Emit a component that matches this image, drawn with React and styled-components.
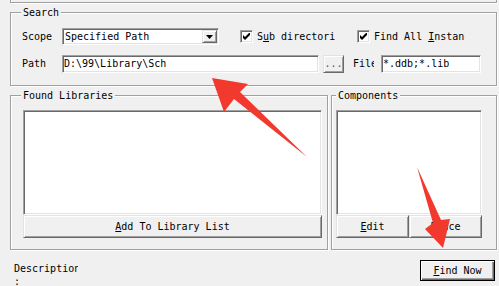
import React from "react";
import styled, { createGlobalStyle } from "styled-components";

const Global = createGlobalStyle`
  html, body { margin: 0; padding: 0; background: #f0f0f0; }
  body {
    width: 499px; height: 286px; overflow: hidden;
    font-family: "DejaVu Sans Mono", "Liberation Mono", monospace;
    font-size: 10px; color: #000;
  }
  * { box-sizing: border-box; }
`;

const Window = styled.div`
  position: relative;
  width: 499px;
  height: 286px;
  overflow: hidden;
  padding-left: 10px;
`;

const Content = styled.div`
  width: 487px;
  display: flex;
  flex-direction: column;
`;

const TopFrame = styled.div`
  height: 3px;
  border: 1px solid #a0a0a0;
  border-top: none;
  box-shadow: 1px 1px 0 #fff, inset 1px 0 0 #fff;
`;

const Group = styled.div`
  position: relative;
  border: 1px solid #a0a0a0;
  box-shadow: inset 1px 1px 0 #fff, 1px 1px 0 #fff;
  width: ${(p) => p.$w}px;
  height: ${(p) => p.$h}px;
  margin-top: ${(p) => p.$mt || 0}px;
  padding: ${(p) => p.$pad};
  display: flex;
  flex-direction: column;
`;

const Legend = styled.span`
  position: absolute;
  top: -6px;
  left: ${(p) => p.$left}px;
  padding: 0 2px;
  line-height: 12px;
  background: #f0f0f0;
  white-space: nowrap;
`;

const Row = styled.div`
  display: flex;
  align-items: center;
  height: ${(p) => p.$h}px;
  margin-top: ${(p) => p.$mt || 0}px;
`;

const Label = styled.span`
  width: ${(p) => p.$w}px;
  margin-left: ${(p) => p.$ml || 0}px;
  white-space: nowrap;
  overflow: hidden;
  line-height: 12px;
  flex: none;
`;

const Field = styled.div`
  width: ${(p) => p.$w}px;
  height: ${(p) => p.$h}px;
  margin-left: ${(p) => p.$ml || 0}px;
  flex: none;
  background: #fff;
  border: 1px solid;
  border-color: #a0a0a0 #fff #fff #a0a0a0;
  box-shadow: inset 1px 1px 0 #696969, inset -1px -1px 0 #e3e3e3;
  padding: 1px 1px 1px ${(p) => p.$pl || 1}px;
  display: flex;
  align-items: center;
  white-space: nowrap;
  overflow: hidden;
  line-height: 12px;
`;

const FieldText = styled.span`
  flex: 1;
  overflow: hidden;
`;

const DropButton = styled.div`
  width: 15px;
  height: 13px;
  flex: none;
  background: #f0f0f0;
  border: 1px solid;
  border-color: #e3e3e3 #696969 #696969 #e3e3e3;
  box-shadow: inset 1px 1px 0 #fff, inset -1px -1px 0 #a0a0a0;
  display: flex;
  align-items: center;
  justify-content: center;
  padding-top: 1px;
`;

const Button = styled.div`
  width: ${(p) => p.$w}px;
  height: ${(p) => p.$h}px;
  margin-left: ${(p) => p.$ml || 0}px;
  flex: none;
  background: #f0f0f0;
  border: 1px solid;
  border-color: #e3e3e3 #696969 #696969 #e3e3e3;
  box-shadow: inset 1px 1px 0 #fff, inset -1px -1px 0 #a0a0a0;
  display: flex;
  align-items: center;
  justify-content: center;
  line-height: 12px;
  white-space: nowrap;
  color: ${(p) => p.$color || "#000"};
`;

const DefaultButton = styled(Button)`
  border-color: #000;
  box-shadow: inset 1px 1px 0 #fff, inset -1px -1px 0 #696969,
    inset -2px -2px 0 #a0a0a0;
`;

const CheckBox = styled.div`
  width: 13px;
  height: 13px;
  flex: none;
  margin-left: ${(p) => p.$ml || 0}px;
  background: #fff;
  border: 1px solid;
  border-color: #a0a0a0 #fff #fff #a0a0a0;
  box-shadow: inset 1px 1px 0 #696969, inset -1px -1px 0 #e3e3e3;
  display: flex;
  align-items: center;
  justify-content: center;
`;

const ListBox = styled.div`
  width: ${(p) => p.$w}px;
  height: ${(p) => p.$h}px;
  background: #fff;
  border: 1px solid;
  border-color: #a0a0a0 #fff #fff #a0a0a0;
  box-shadow: inset 1px 1px 0 #696969, inset -1px -1px 0 #e3e3e3;
`;

const ButtonRow = styled.div`
  display: flex;
`;

const Columns = styled.div`
  display: flex;
  gap: 3px;
  margin-top: 9px;
`;

const Footer = styled.div`
  display: flex;
  justify-content: space-between;
  align-items: flex-start;
  padding-top: 10px;
  padding-right: 2px;
`;

const Description = styled.div`
  width: 64px;
  margin-left: 4px;
  margin-top: 2px;
  overflow: hidden;
  white-space: nowrap;
  line-height: 13px;
`;

const Overlay = styled.svg`
  position: absolute;
  left: 0;
  top: 0;
  pointer-events: none;
`;

const Check = () => (
  <svg width="7" height="7" viewBox="0 0 7 7">
    <path d="M0 2 L2 4 L7 -1 L7 2 L2 7 L0 5 Z" fill="#000" />
  </svg>
);

const DownTri = () => (
  <svg width="7" height="4" viewBox="0 0 7 4">
    <path d="M0 0 L7 0 L3.5 4 Z" fill="#000" />
  </svg>
);

export default function App() {
  return (
    <>
      <Global />
      <Window>
        <Content>
          <TopFrame />
          <Group $w={487} $h={74} $mt={9} $pad="15px 0 0 11px">
            <Legend $left={10}>Search</Legend>
            <Row $h={17}>
              <Label $w={40}>Scope</Label>
              <Field $w={157} $h={17} $pl={2}>
                <FieldText>Specified Path</FieldText>
                <DropButton>
                  <DownTri />
                </DropButton>
              </Field>
              <CheckBox $ml={21}>
                <Check />
              </CheckBox>
              <Label $w={78} $ml={4}>
                S<u>u</u>b directories
              </Label>
              <CheckBox $ml={22}>
                <Check />
              </CheckBox>
              <Label $w={91} $ml={4}>
                Find All <u>I</u>nstances
              </Label>
            </Row>
            <Row $h={18} $mt={10}>
              <Label $w={40}>Path</Label>
              <Field $w={257} $h={18} $pl={1}>
                <FieldText>D:\99\Library\Sch</FieldText>
              </Field>
              <Button $w={21} $h={18} $ml={4} $color="#555">
                ...
              </Button>
              <Label $w={21} $ml={9}>
                File
              </Label>
              <Field $w={100} $h={18} $ml={7} $pl={1}>
                <FieldText>*.ddb;*.lib</FieldText>
              </Field>
            </Row>
          </Group>
          <Columns>
            <Group $w={318} $h={155} $pad="14px 0 0 12px">
              <Legend $left={10}>Found Libraries</Legend>
              <ListBox $w={299} $h={105} />
              <Button $w={299} $h={23}>
                <span>
                  <u>A</u>dd To Library List
                </span>
              </Button>
            </Group>
            <Group $w={166} $h={155} $pad="14px 0 0 4px">
              <Legend $left={4}>Components</Legend>
              <ListBox $w={146} $h={105} />
              <ButtonRow>
                <Button $w={73} $h={23}>
                  <span>
                    <u>E</u>dit
                  </span>
                </Button>
                <Button $w={73} $h={23}>
                  Place
                </Button>
              </ButtonRow>
            </Group>
          </Columns>
          <Footer>
            <Description>
              Description
              <br />:
            </Description>
            <DefaultButton $w={75} $h={21}>
              <span>
                <u>F</u>ind Now
              </span>
            </DefaultButton>
          </Footer>
        </Content>
        <Overlay width="499" height="286" viewBox="0 0 499 286">
          <polygon
            points="212,78 248,84 240,92 307,157 234,99 224,112"
            fill="#f2392e"
          />
          <polygon
            points="417,167 441,220 450,219 443,248 425,229 433,223"
            fill="#f2392e"
          />
        </Overlay>
      </Window>
    </>
  );
}
